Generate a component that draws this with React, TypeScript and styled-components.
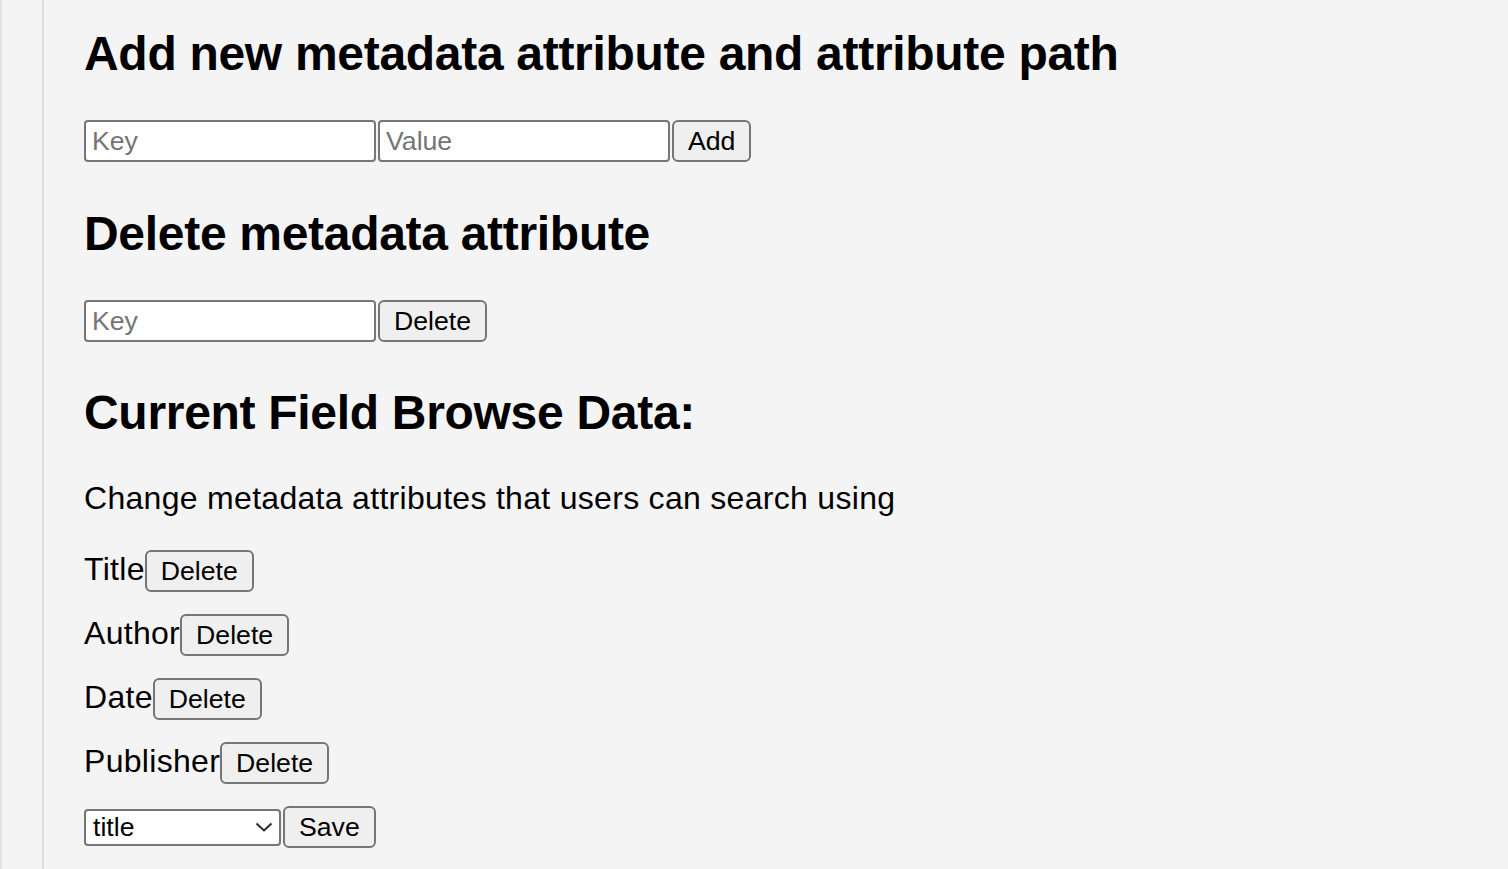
import React, { useState } from "react";
import styled, { createGlobalStyle } from "styled-components";

const GlobalStyle = createGlobalStyle`
  html, body {
    margin: 0;
    padding: 0;
    background: #f4f4f4;
    font-family: "Liberation Sans", Arial, sans-serif;
    color: #000;
  }
  #root { min-height: 869px; }
`;

const Page = styled.div`
  display: flex;
  min-height: 869px;
  background: #f4f4f4;
  border-left: 2px solid #e2e2e2;
  box-sizing: border-box;
`;

const Gutter = styled.div`
  width: 40px;
  flex-shrink: 0;
`;

const Main = styled.main`
  flex: 1;
  border-left: 2px solid #dcdcdc;
  padding: 26px 0 0 40px;
  display: flex;
  flex-direction: column;
  align-items: flex-start;
`;

const Heading = styled.h2<{ $after?: number }>`
  margin: 0 0 ${(p) => p.$after ?? 38}px 0;
  font-size: 48px;
  line-height: 56px;
  font-weight: 700;
  letter-spacing: -0.3px;
`;

const Row = styled.div<{ $after?: number; $align?: string }>`
  display: flex;
  align-items: ${(p) => p.$align ?? "baseline"};
  margin-bottom: ${(p) => p.$after ?? 44}px;
`;

const TextInput = styled.input`
  box-sizing: border-box;
  width: 292px;
  height: 42px;
  margin: 0 2px 0 0;
  padding: 2px 6px;
  border: 2px solid #767676;
  border-radius: 4px;
  background: #fff;
  font-family: "Liberation Sans", Arial, sans-serif;
  font-size: 26.67px;
  color: #000;
  outline: none;
  &::placeholder {
    color: #757575;
  }
`;

const Button = styled.button`
  box-sizing: border-box;
  height: 42px;
  margin: 0;
  padding: 2px 14px;
  border: 2px solid #767676;
  border-radius: 6px;
  background: #efefef;
  font-family: "Liberation Sans", Arial, sans-serif;
  font-size: 26.67px;
  color: #000;
  cursor: pointer;
`;

const Paragraph = styled.p`
  margin: 39px 0 33px 0;
  font-size: 32px;
  line-height: 37px;
  letter-spacing: 0.3px;
`;

const Label = styled.span`
  font-size: 32px;
  line-height: 37px;
  letter-spacing: 0.3px;
`;

const SelectWrap = styled.div`
  position: relative;
  margin-right: 2px;
`;

const Select = styled.select`
  box-sizing: border-box;
  width: 197px;
  height: 37px;
  margin: 0;
  padding: 0 30px 0 7px;
  border: 2px solid #767676;
  border-radius: 4px;
  background: #fff;
  font-family: "Liberation Sans", Arial, sans-serif;
  font-size: 26.67px;
  color: #000;
  appearance: none;
  -webkit-appearance: none;
  outline: none;
`;

const Chevron = styled.svg`
  position: absolute;
  right: 8px;
  top: 50%;
  width: 18px;
  height: 10px;
  margin-top: -5px;
  pointer-events: none;
`;

const fields = ["Title", "Author", "Date", "Publisher"];

export default function App() {
  const [selected, setSelected] = useState("title");
  return (
    <>
      <GlobalStyle />
      <Page>
        <Gutter />
        <Main>
          <Heading>Add new metadata attribute and attribute path</Heading>
          <Row $after={44}>
            <TextInput placeholder="Key" />
            <TextInput placeholder="Value" />
            <Button>Add</Button>
          </Row>
          <Heading>Delete metadata attribute</Heading>
          <Row $after={43}>
            <TextInput placeholder="Key" />
            <Button>Delete</Button>
          </Row>
          <Heading $after={0}>Current Field Browse Data:</Heading>
          <Paragraph>Change metadata attributes that users can search using</Paragraph>
          {fields.map((f) => (
            <Row key={f} $after={22}>
              <Label>{f}</Label>
              <Button>Delete</Button>
            </Row>
          ))}
          <Row $after={0} $align="center">
            <SelectWrap>
              <Select value={selected} onChange={(e) => setSelected(e.target.value)}>
                <option value="title">title</option>
                <option value="author">author</option>
                <option value="date">date</option>
                <option value="publisher">publisher</option>
              </Select>
              <Chevron viewBox="0 0 18 10">
                <path d="M1.5 1.5 L9 8.5 L16.5 1.5" fill="none" stroke="#222" strokeWidth="1.8" />
              </Chevron>
            </SelectWrap>
            <Button>Save</Button>
          </Row>
        </Main>
      </Page>
    </>
  );
}
